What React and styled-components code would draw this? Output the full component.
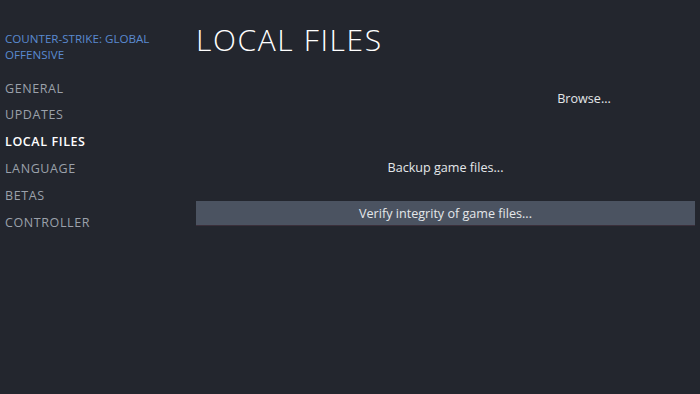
import React from "react";
import styled, { createGlobalStyle } from "styled-components";

const Global = createGlobalStyle`
  html, body { margin: 0; padding: 0; background: #23262e; }
  body { font-family: "Open Sans", "Noto Sans", sans-serif; }
`;

const Page = styled.div`
  display: grid;
  grid-template-columns: 190px 1fr;
  height: 394px;
  background: #23262e;
  overflow: hidden;
`;

const Sidebar = styled.nav`
  padding: 31px 0 0 5px;
  display: flex;
  flex-direction: column;
`;

const GameTitle = styled.div`
  color: #5a8ad0;
  font-size: 11.6px;
  line-height: 16px;
  font-weight: 500;
  text-transform: uppercase;
  margin-bottom: 12.6px;
`;

const NavItem = styled.div`
  color: ${(p) => (p.$active ? "#ffffff" : "#9ba1ab")};
  font-weight: ${(p) => (p.$active ? 600 : 400)};
  font-size: 12.5px;
  line-height: 26.8px;
  letter-spacing: 0.6px;
  text-transform: uppercase;
`;

const Main = styled.main`
  padding: 20px 5px 0 6px;
  display: flex;
  flex-direction: column;
`;

const Heading = styled.h1`
  margin: 0 0 26px;
  color: #ffffff;
  font-weight: 300;
  font-size: 30px;
  line-height: 40px;
  letter-spacing: 1.6px;
`;

const Row = styled.div`
  display: flex;
  justify-content: flex-end;
  margin-bottom: ${(p) => p.$gap || 0}px;
`;

const Button = styled.button`
  width: ${(p) => p.$width || "100%"};
  height: 24px;
  border: none;
  background: ${(p) => (p.$hover ? "#4b5361" : "transparent")};
  box-shadow: ${(p) => (p.$hover ? "0 1px 0 #3a2f3a" : "none")};
  color: #e4e7ea;
  font-family: "Open Sans", "Noto Sans", sans-serif;
  font-size: 12.6px;
  font-weight: 500;
  padding: 0;
  cursor: pointer;
`;

const navItems = ["General", "Updates", "Local Files", "Language", "Betas", "Controller"];

export default function App() {
  return (
    <>
      <Global />
      <Page>
        <Sidebar>
          <GameTitle>Counter-Strike: Global Offensive</GameTitle>
          {navItems.map((n) => (
            <NavItem key={n} $active={n === "Local Files"}>
              {n}
            </NavItem>
          ))}
        </Sidebar>
        <Main>
          <Heading>LOCAL FILES</Heading>
          <Row $gap={45}>
            <Button $width="222px">Browse...</Button>
          </Row>
          <Row $gap={22}>
            <Button>Backup game files...</Button>
          </Row>
          <Row>
            <Button $hover>Verify integrity of game files...</Button>
          </Row>
        </Main>
      </Page>
    </>
  );
}
